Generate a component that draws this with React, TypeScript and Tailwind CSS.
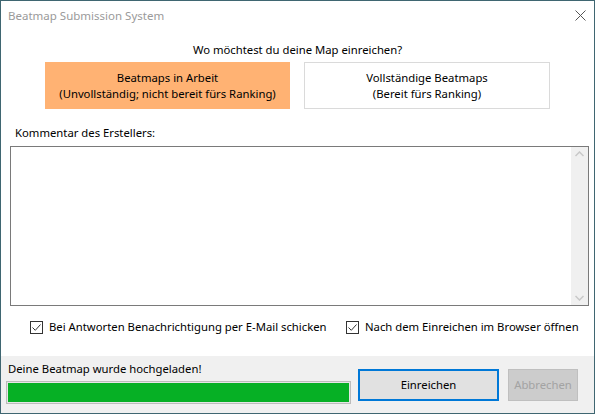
import React from "react";

const Check = () => (
  <span className="w-[13px] h-[13px] border border-[#333] bg-white flex items-center justify-center shrink-0">
    <svg width="11" height="11" viewBox="0 0 11 11">
      <path d="M1.5 5.5 L4.3 8.3 L9.5 2.5" stroke="#333" strokeWidth="1" fill="none" />
    </svg>
  </span>
);

export default function App() {
  return (
    <div
      className="w-[595px] h-[414px] border border-[#3f6671] bg-white flex flex-col text-[11.3px] text-black overflow-hidden whitespace-nowrap"
      style={{ fontFamily: '"Noto Sans", "Open Sans", sans-serif' }}
    >
      {/* title bar */}
      <div className="h-[29px] flex items-center justify-between pl-[7px] pr-[8px] shrink-0">
        <span className="text-[#9a9a9a] text-[11.5px]">Beatmap Submission System</span>
        <svg width="11" height="11" viewBox="0 0 11 11">
          <path d="M0.5 0.5 L10.5 10.5 M10.5 0.5 L0.5 10.5" stroke="#555" strokeWidth="1" />
        </svg>
      </div>
      {/* body */}
      <div className="flex-1 flex flex-col px-[9px]">
        <div className="text-center leading-[16px] mt-[12px]">Wo möchtest du deine Map einreichen?</div>
        <div className="flex justify-between px-[35px] mt-[4px]">
          <div className="w-[245px] h-[47px] bg-[#ffb273] flex flex-col items-center justify-center leading-[16px]">
            <span>Beatmaps in Arbeit</span>
            <span>(Unvollständig; nicht bereit fürs Ranking)</span>
          </div>
          <div className="w-[246px] h-[47px] bg-white border border-[#dadada] flex flex-col items-center justify-center leading-[16px]">
            <span>Vollständige Beatmaps</span>
            <span>(Bereit fürs Ranking)</span>
          </div>
        </div>
        <div className="mt-[16px] pl-[5px] leading-[16px]">Kommentar des Erstellers:</div>
        <div className="mt-[5px] h-[160px] border border-[#7a7a7a] flex justify-end w-[579px]">
          <div className="w-[17px] h-full bg-[#f0f0f0] flex flex-col justify-between items-center py-[4px]">
            <svg width="9" height="6" viewBox="0 0 9 6">
              <path d="M0.5 5 L4.5 1 L8.5 5" stroke="#c8c8c8" strokeWidth="1.5" fill="none" />
            </svg>
            <svg width="9" height="6" viewBox="0 0 9 6">
              <path d="M0.5 1 L4.5 5 L8.5 1" stroke="#c8c8c8" strokeWidth="1.5" fill="none" />
            </svg>
          </div>
        </div>
        <div className="flex items-center mt-[13px] leading-[16px]">
          <div className="flex items-center gap-[6px] ml-[20px] w-[316px]">
            <Check />
            <span>Bei Antworten Benachrichtigung per E-Mail schicken</span>
          </div>
          <div className="flex items-center gap-[6px]">
            <Check />
            <span>Nach dem Einreichen im Browser öffnen</span>
          </div>
        </div>
      </div>
      {/* footer */}
      <div className="h-[57px] bg-[#f0f0f0] shrink-0 flex items-end pb-[9px] pl-[5px]">
        <div className="flex flex-col">
          <span className="leading-[16px] ml-[2px] mb-[4px]">Deine Beatmap wurde hochgeladen!</span>
          <div className="w-[345px] h-[23px] border border-[#bcbcbc] bg-[#e6e6e6] p-px">
            <div className="w-full h-full bg-[#06b025]" />
          </div>
        </div>
        <div className="flex gap-[9px] ml-[7px] mb-[3px]">
          <div className="w-[141px] h-[32px] bg-[#e1e1e1] border-2 border-[#0078d7] flex items-center justify-center">
            Einreichen
          </div>
          <div className="w-[70px] h-[32px] bg-[#cccccc] border border-[#bfbfbf] flex items-center justify-center text-[#a3a3a3]">
            Abbrechen
          </div>
        </div>
      </div>
    </div>
  );
}
